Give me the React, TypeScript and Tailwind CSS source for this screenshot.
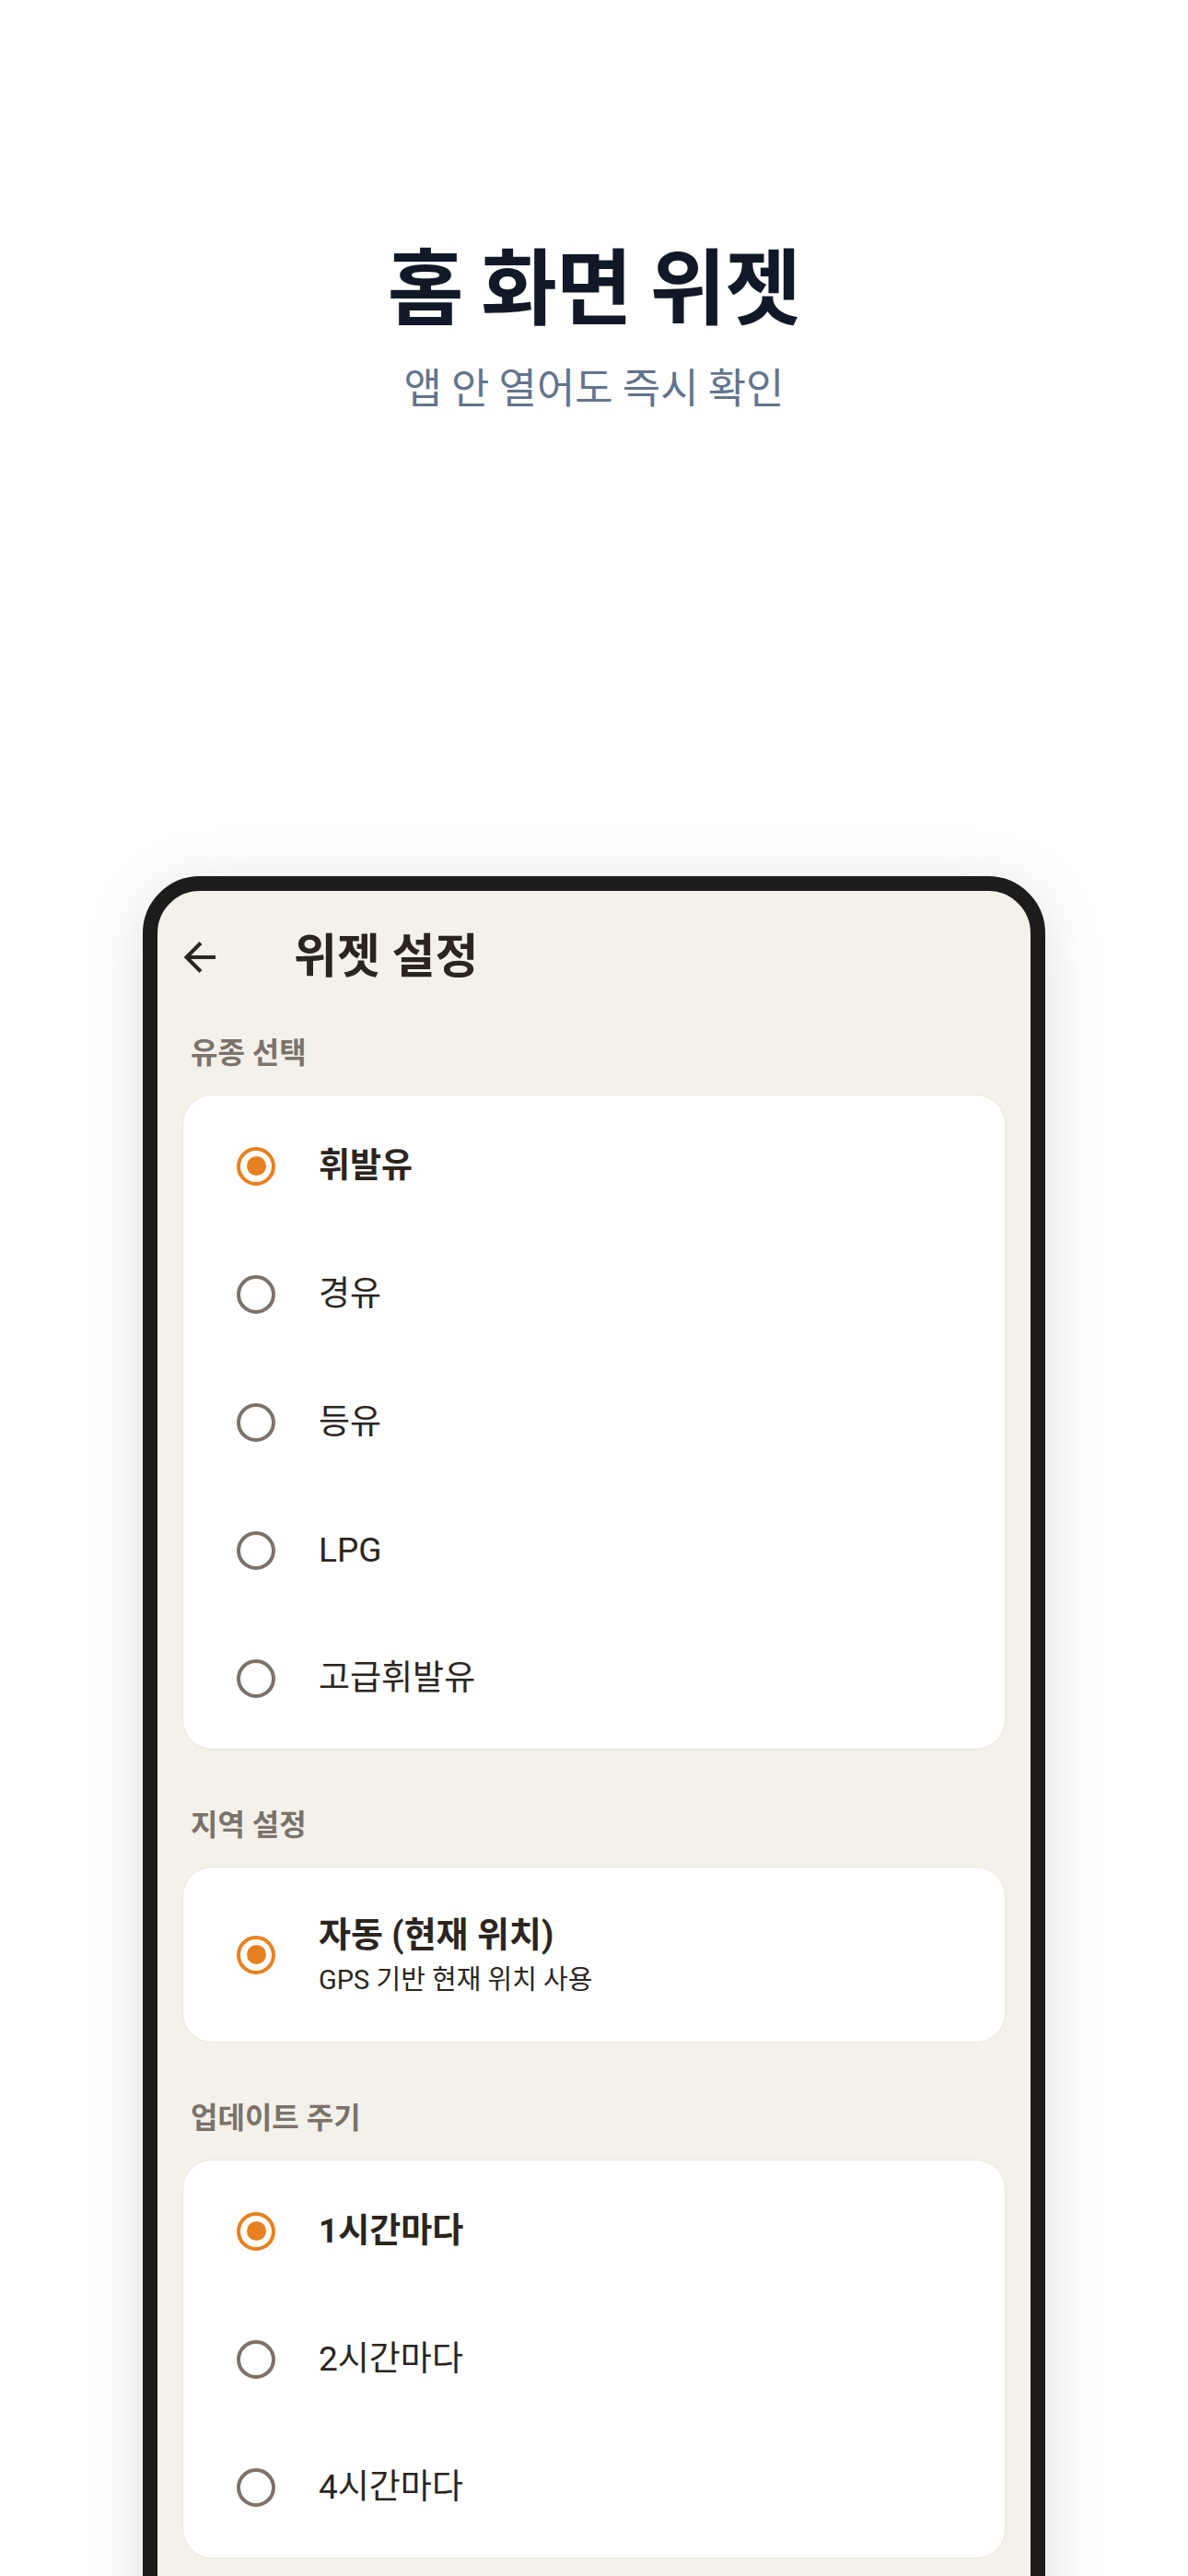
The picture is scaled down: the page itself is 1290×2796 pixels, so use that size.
import React from 'react';

type Option = { label: string; selected?: boolean };

const fuelOptions: Option[] = [
  { label: '휘발유', selected: true },
  { label: '경유' },
  { label: '등유' },
  { label: 'LPG' },
  { label: '고급휘발유' },
];

const intervalOptions: Option[] = [
  { label: '1시간마다', selected: true },
  { label: '2시간마다' },
  { label: '4시간마다' },
];

const Radio = ({ selected }: { selected?: boolean }) => (
  <span
    className={`flex items-center justify-center w-[42px] h-[42px] rounded-full border-[4px] shrink-0 ${
      selected ? 'border-[#e7811f]' : 'border-[#7b726a]'
    }`}
  >
    {selected && <span className="w-[21px] h-[21px] rounded-full bg-[#e7811f]" />}
  </span>
);

const SectionLabel = ({ children, first }: { children: React.ReactNode; first?: boolean }) => (
  <div
    className={`pl-[36px] text-[32px] leading-[40px] font-semibold text-[#7b736b] ${
      first ? 'mt-[12px]' : 'mt-[62px]'
    } mb-[25px]`}
  >
    {children}
  </div>
);

const OptionCard = ({ options }: { options: Option[] }) => (
  <div className="mx-[27px] bg-white rounded-[32px] border border-[#ebe6dd] py-[7px]">
    {options.map((opt) => (
      <div key={opt.label} className="h-[139px] flex items-center pl-[58px]">
        <Radio selected={opt.selected} />
        <span
          className={`ml-[47px] text-[37px] leading-[46px] text-[#2b251e] ${
            opt.selected ? 'font-bold' : 'font-normal'
          }`}
        >
          {opt.label}
        </span>
      </div>
    ))}
  </div>
);

export default function App() {
  return (
    <div
      className="w-full h-[2796px] overflow-hidden bg-white flex flex-col items-center"
      style={{ fontFamily: '"Noto Sans CJK KR", "Noto Sans", sans-serif' }}
    >
      <h1 className="pt-[253px] text-[90px] leading-[106px] font-bold tracking-[-0.01em] text-[#111827]">
        홈 화면 위젯
      </h1>
      <p className="mt-[30px] text-[45px] leading-[60px] text-[#64748b]">앱 안 열어도 즉시 확인</p>

      <div
        className="mt-[502px] w-[980px] shrink-0 rounded-[62px] border-[16px] border-[#1c1c1c] bg-[#f4f1eb] shadow-[0_10px_70px_rgba(0,0,0,0.13)] pb-[120px]"
        style={{ fontFamily: 'Roboto, "Noto Sans CJK KR", sans-serif' }}
      >
        <div className="h-[144px] flex items-center pl-[28px]">
          <svg width="36" height="36" viewBox="0 0 36 36" fill="none" className="shrink-0">
            <path d="M35 18H4" stroke="#2b251e" strokeWidth="4" />
            <path d="M19 2.5L3.5 18L19 33.5" stroke="#2b251e" strokeWidth="4" />
          </svg>
          <span className="ml-[84px] text-[51px] leading-[62px] font-bold text-[#2b251e]">위젯 설정</span>
        </div>

        <SectionLabel first>유종 선택</SectionLabel>
        <OptionCard options={fuelOptions} />

        <SectionLabel>지역 설정</SectionLabel>
        <div className="mx-[27px] bg-white rounded-[32px] border border-[#ebe6dd] py-[7px]">
          <div className="h-[175px] flex items-center pl-[58px]">
            <Radio selected />
            <div className="ml-[47px] flex flex-col">
              <span className="text-[38px] leading-[46px] font-bold text-[#2b251e]">자동 (현재 위치)</span>
              <span className="mt-[8px] text-[29px] leading-[36px] text-[#2b251e]">GPS 기반 현재 위치 사용</span>
            </div>
          </div>
        </div>

        <SectionLabel>업데이트 주기</SectionLabel>
        <OptionCard options={intervalOptions} />
      </div>
    </div>
  );
}
